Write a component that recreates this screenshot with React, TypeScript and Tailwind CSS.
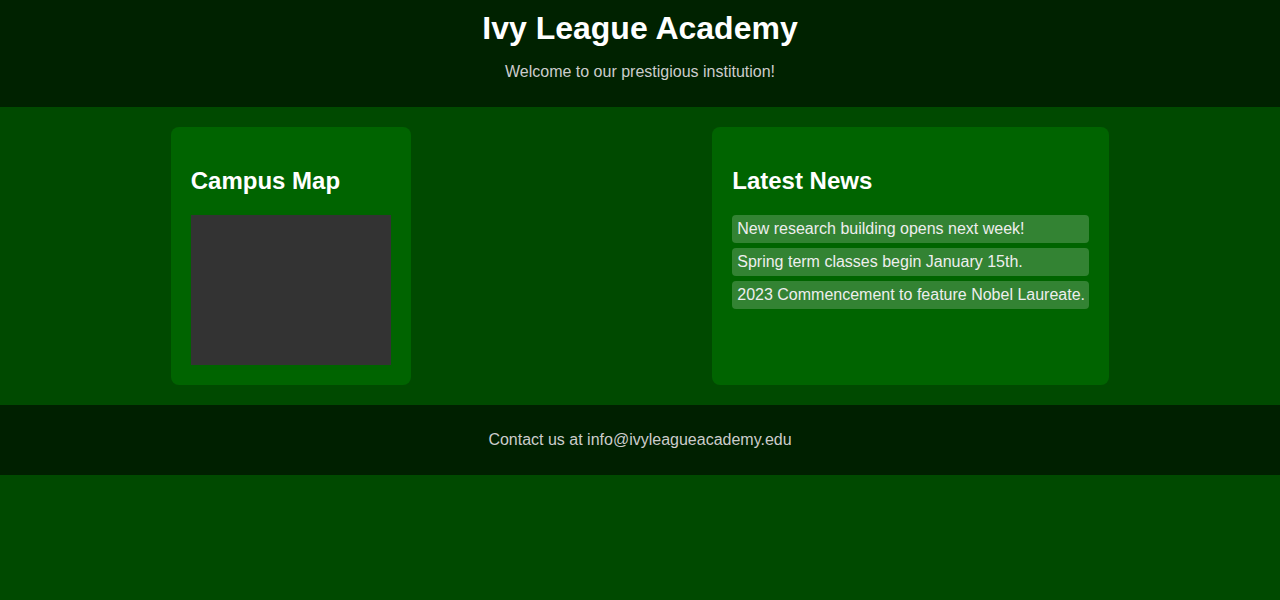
export default function App() {
  const news = [
    "New research building opens next week!",
    "Spring term classes begin January 15th.",
    "2023 Commencement to feature Nobel Laureate.",
  ];
  return (
    <div className="min-h-screen bg-[#004a00] text-white" style={{ fontFamily: '"Liberation Sans", Arial, sans-serif' }}>
      <header className="bg-[#002200] py-[10px] text-center">
        <h1 className="m-0 text-[32px] font-bold leading-[37px]">Ivy League Academy</h1>
        <p className="my-4 text-base leading-[18px] text-[#cccccc]">Welcome to our prestigious institution!</p>
      </header>
      <main className="flex justify-around p-5">
        <section className="w-[240px] rounded-[8px] bg-[#006400] p-5">
          <h2 className="my-[19.92px] text-2xl font-bold leading-[28px]">Campus Map</h2>
          <div className="h-[150px] w-[200px] bg-[#333333]"></div>
        </section>
        <section className="w-[397px] rounded-[8px] bg-[#006400] p-5">
          <h2 className="my-[19.92px] text-2xl font-bold leading-[28px]">Latest News</h2>
          <ul className="m-0 list-none p-0">
            {news.map((n) => (
              <li key={n} className="mb-[5px] whitespace-nowrap rounded-[4px] bg-white/20 px-[5px] py-[5px] text-base leading-[18px] text-[#eeeeee]">
                {n}
              </li>
            ))}
          </ul>
        </section>
      </main>
      <footer className="bg-[#002000] py-[10px] text-center">
        <p className="my-4 text-base leading-[18px] text-[#cccccc]">Contact us at info@ivyleagueacademy.edu</p>
      </footer>
    </div>
  );
}
